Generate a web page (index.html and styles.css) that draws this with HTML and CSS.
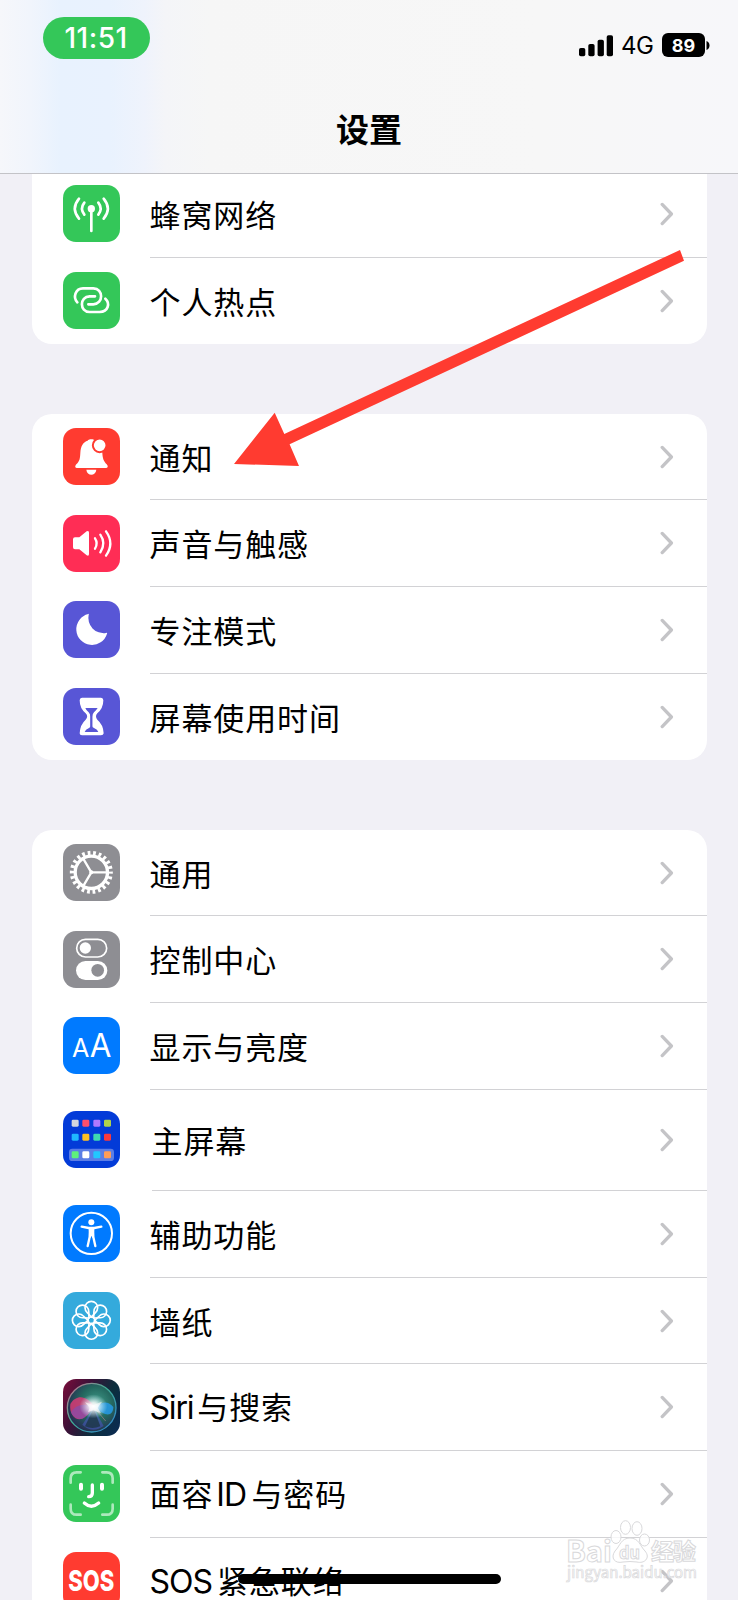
FILE: index.html
```html
<!DOCTYPE html>
<html lang="zh-CN">
	<head>
		<meta charset="utf-8">
		<title>设置</title>
		<meta name="viewport" content="width=device-width, initial-scale=1">
		<link rel="stylesheet" href="styles.css">
	</head>
	<body>
		<svg class="defs" aria-hidden="true">
			<symbol id="chevron" viewBox="0 0 14 24">
				<path d="M2.2 2.4 11.4 12 2.2 21.6" fill="none" stroke="#c4c4c7" stroke-width="3.3" stroke-linecap="round" stroke-linejoin="round"/>
			</symbol>
		</svg>
		
		<header class="navbar">
			<div class="status">
				<span class="clock">11:51</span>
				<div class="status-right">
					<svg class="signal" viewBox="0 0 34 22">
						<rect x="0" y="13" width="6.3" height="8.3" rx="1.8"/>
						<rect x="9.3" y="9" width="6.3" height="12.3" rx="1.8"/>
						<rect x="18.6" y="4.7" width="6.3" height="16.6" rx="1.8"/>
						<rect x="27.7" y="0.3" width="6.3" height="21" rx="1.8"/>
					</svg>
					<span class="network">4G</span>
					<span class="battery">89</span>
					<svg class="battery-cap" viewBox="0 0 4 9"><path d="M0.5 0C4.5 1 4.5 8 0.5 9Z"/></svg>
				</div>
			</div>
			<h1>设置</h1>
		</header>
		
		<main>
			<ul class="group first">
				<li class="row">
					<svg class="icon green" viewBox="0 0 171 171">
						<circle cx="85" cy="71" r="11" fill="#fff"/>
						<path class="line" stroke-width="8" d="M85 71V138M64 53Q50 71 64 89M106 53Q120 71 106 89M48 41Q23 71 48 101M122 41Q147 71 122 101"/>
					</svg>
					<div class="cell"><span>蜂窝网络</span><svg class="chevron"><use href="#chevron"/></svg></div>
				</li>
				<li class="row">
					<svg class="icon green" viewBox="0 0 171 171">
						<path class="line" stroke-width="8" d="M43 91C29 76 37 49 60 49H91C122 50 122 96 91 97H76M96 73H80C49 74 49 120 80 120H110C136 119 142 94 127 80"/>
					</svg>
					<div class="cell"><span>个人热点</span><svg class="chevron"><use href="#chevron"/></svg></div>
				</li>
			</ul>
			
			<ul class="group">
				<li class="row">
					<svg class="icon red" viewBox="0 0 171 171">
						<path fill="#fff" d="M41 120C35 120 36 113 40 109C50 99 51 93 52 75C53 53 61 42 74 38C75 32 95 32 96 38C106 42 117 53 118 75C119 93 122 99 131 109C136 114 135 120 130 120ZM70 125H100C98 145 72 145 70 125Z"/>
						<circle cx="110" cy="52" r="20.5" fill="#fff" stroke="#ff3b30" stroke-width="6"/>
					</svg>
					<div class="cell"><span>通知</span><svg class="chevron"><use href="#chevron"/></svg></div>
				</li>
				<li class="row">
					<svg class="icon pink" viewBox="0 0 171 171">
						<path fill="#fff" d="M36 67H49L71 49Q78 45 78 53V117Q78 125 71 121L49 103H36Q30 103 30 97V73Q30 67 36 67Z"/>
						<path class="line" stroke-width="7" d="M96 70Q106 85 96 101M112 59Q130 85 112 112M129 49Q155 85 129 122"/>
					</svg>
					<div class="cell"><span>声音与触感</span><svg class="chevron"><use href="#chevron"/></svg></div>
				</li>
				<li class="row">
					<svg class="icon indigo" viewBox="0 0 171 171">
						<path fill="#fff" d="M76 39A47 47 0 1 0 132 98Q134 94 129 96A46 46 0 0 1 77 41Q79 37 76 39Z"/>
					</svg>
					<div class="cell"><span>专注模式</span><svg class="chevron"><use href="#chevron"/></svg></div>
				</li>
				<li class="row">
					<svg class="icon indigo" viewBox="0 0 171 171">
						<path fill="#fff" d="M57 29H114Q121 30 121 37Q121 61 103 76Q95 85 103 95Q121 110 122 136Q121 142 114 142H57Q50 142 50 136Q51 110 68 95Q77 85 68 76Q50 61 50 37Q50 30 57 29Z"/>
						<path fill="#5856d6" d="M67 60H104Q99 68 93 73Q88 78 88 86V115Q88 118 93 120Q104 125 106 132H65Q67 125 78 120Q82 118 82 115V86Q82 78 77 73Q70 68 67 60Z"/>
						<path fill="none" stroke="#5856d6" stroke-width="5" d="M85 66V118"/>
					</svg>
					<div class="cell"><span>屏幕使用时间</span><svg class="chevron"><use href="#chevron"/></svg></div>
				</li>
			</ul>
			
			<ul class="group">
				<li class="row">
					<svg class="icon gray" viewBox="0 0 171 171">
						<circle cx="85" cy="85" r="58" fill="none" stroke="#fff" stroke-width="13" pathLength="220" stroke-dasharray="5 5" stroke-dashoffset="2.5"/>
						<circle cx="85" cy="85" r="48.5" fill="none" stroke="#fff" stroke-width="10"/>
						<path class="line" stroke-width="7" d="M85 85H130M85 85 62 46M85 85 62 124"/>
						<circle cx="85" cy="85" r="6" fill="#fff"/>
					</svg>
					<div class="cell"><span>通用</span><svg class="chevron"><use href="#chevron"/></svg></div>
				</li>
				<li class="row">
					<svg class="icon gray" viewBox="0 0 171 171">
						<rect x="41" y="25" width="90" height="53" rx="26.5" fill="none" stroke="#fff" stroke-width="5"/>
						<circle cx="67" cy="51" r="17" fill="#fff"/>
						<rect x="39" y="90" width="94" height="57" rx="28.5" fill="#fff"/>
						<circle cx="104" cy="118" r="19" fill="#8e8e93"/>
					</svg>
					<div class="cell"><span>控制中心</span><svg class="chevron"><use href="#chevron"/></svg></div>
				</li>
				<li class="row">
					<svg class="icon blue" viewBox="0 0 171 171">
						<text class="glyph" x="27" y="121" font-size="77" textLength="52" lengthAdjust="spacingAndGlyphs">A</text>
						<text class="glyph" x="80" y="121" font-size="97" textLength="65" lengthAdjust="spacingAndGlyphs">A</text>
					</svg>
					<div class="cell"><span>显示与亮度</span><svg class="chevron"><use href="#chevron"/></svg></div>
				</li>
				<li class="row tall">
					<svg class="icon home" viewBox="0 0 171 171">
						<rect x="18" y="113" width="135" height="37" rx="10" fill="#5b7de6"/>
						<rect x="26" y="26" width="21" height="21" rx="4" fill="#d3d6de"/>
						<rect x="58" y="26" width="21" height="21" rx="4" fill="#ff4f6c"/>
						<rect x="91" y="26" width="21" height="21" rx="4" fill="#b078ff"/>
						<rect x="123" y="26" width="21" height="21" rx="4" fill="#b1d34b"/>
						<rect x="26" y="68" width="21" height="21" rx="4" fill="#1fb8ff"/>
						<rect x="58" y="68" width="21" height="21" rx="4" fill="#ffc023"/>
						<rect x="91" y="68" width="21" height="21" rx="4" fill="#3fd8b0"/>
						<rect x="123" y="68" width="21" height="21" rx="4" fill="#f9393d"/>
						<rect x="26" y="121" width="21" height="21" rx="4" fill="#5ef27c"/>
						<rect x="58" y="121" width="21" height="21" rx="4" fill="#fff"/>
						<rect x="91" y="121" width="21" height="21" rx="4" fill="#21c7ff"/>
						<rect x="123" y="121" width="21" height="21" rx="4" fill="#ff9d58"/>
					</svg>
					<div class="cell"><span>主屏幕</span><svg class="chevron"><use href="#chevron"/></svg></div>
				</li>
				<li class="row">
					<svg class="icon blue" viewBox="0 0 171 171">
						<circle cx="85" cy="85" r="62" fill="none" stroke="#fff" stroke-width="6"/>
						<circle cx="85" cy="52" r="9" fill="#fff"/>
						<path class="line" stroke-width="7" d="M56 65 77 69H94L115 65M74 123 80 96 81 72M97 123 91 96 90 72"/>
						<path fill="#fff" d="M77 67H94L92 99H89L85 93 82 99H79Z"/>
					</svg>
					<div class="cell"><span>辅助功能</span><svg class="chevron"><use href="#chevron"/></svg></div>
				</li>
				<li class="row">
					<svg class="icon cyan" viewBox="0 0 171 171">
						<g fill="none" stroke="#fff" stroke-width="5" transform="translate(85 85)">
							<path id="petal" d="M0-10-13-24A19 19 0 1 1 13-24Z"/>
							<use href="#petal" transform="rotate(45)"/>
							<use href="#petal" transform="rotate(90)"/>
							<use href="#petal" transform="rotate(135)"/>
							<use href="#petal" transform="rotate(180)"/>
							<use href="#petal" transform="rotate(225)"/>
							<use href="#petal" transform="rotate(270)"/>
							<use href="#petal" transform="rotate(315)"/>
							<circle r="10"/>
						</g>
					</svg>
					<div class="cell"><span>墙纸</span><svg class="chevron"><use href="#chevron"/></svg></div>
				</li>
				<li class="row">
					<svg class="icon siri" viewBox="0 0 171 171">
						<defs>
							<linearGradient id="ring" x1="0" y1="0" x2="1" y2="1">
								<stop offset="0" stop-color="#d4688a"/>
								<stop offset=".45" stop-color="#3fae95"/>
								<stop offset="1" stop-color="#2f7fd0"/>
							</linearGradient>
							<radialGradient id="orb" cx=".6" cy=".4" r=".65">
								<stop offset="0" stop-color="#3f9a88"/>
								<stop offset=".5" stop-color="#24685f"/>
								<stop offset="1" stop-color="#252750"/>
							</radialGradient>
							<radialGradient id="glow">
								<stop offset="0" stop-color="#fff"/>
								<stop offset=".3" stop-color="#fff" stop-opacity=".85"/>
								<stop offset="1" stop-color="#c8f4ff" stop-opacity="0"/>
							</radialGradient>
						</defs>
						<circle cx="86" cy="86" r="73" fill="url(#orb)" stroke="url(#ring)" stroke-width="4"/>
						<path fill="#4a55c4" opacity=".55" d="M92 86 58 137Q88 165 122 141Z"/>
						<path fill="#1b3440" opacity=".75" d="M92 88 66 142Q88 152 112 142Z"/>
						<path fill="#d83b76" opacity=".85" d="M94 84C75 50 40 44 22 75C17 112 45 132 66 114C78 106 83 94 94 84Z"/>
						<path fill="#7b50b8" opacity=".6" d="M94 84C60 70 35 80 24 100C35 124 58 124 69 112Z"/>
						<path fill="#279ae8" opacity=".85" d="M94 84C110 72 132 60 151 84C150 115 125 112 94 84Z"/>
						<path fill="none" stroke="#e98aa0" stroke-width="2" opacity=".7" d="M94 86 128 126"/>
						<ellipse cx="91" cy="82" rx="42" ry="36" fill="url(#glow)"/>
						<path fill="#fff" d="M66 70 91 78 117 68 104 86 114 103 91 94 75 99 80 86Z" opacity=".6"/>
					</svg>
					<div class="cell"><span><b class="latin siri-word">Siri</b>与搜索</span><svg class="chevron"><use href="#chevron"/></svg></div>
				</li>
				<li class="row">
					<svg class="icon green" viewBox="0 0 171 171">
						<path class="line" stroke-width="8" opacity=".6" d="M23 53V40Q23 22 41 22H53M118 22H131Q149 22 149 40V53M149 119V131Q149 149 131 149H118M53 149H41Q23 149 23 131V119"/>
						<path class="line" stroke-width="12" d="M54 59V71M117 59V71"/>
						<path class="line" stroke-width="10" d="M88 60V84Q88 95 77 95M64 114Q85 133 107 114"/>
					</svg>
					<div class="cell"><span>面容<b class="latin id-word">ID</b>与密码</span><svg class="chevron"><use href="#chevron"/></svg></div>
				</li>
				<li class="row">
					<svg class="icon red" viewBox="0 0 171 171">
						<text class="glyph heavy" x="16" y="117" font-size="87" textLength="138" lengthAdjust="spacingAndGlyphs">SOS</text>
					</svg>
					<div class="cell"><span><b class="latin sos-word">SOS</b>紧急联络</span><svg class="chevron"><use href="#chevron"/></svg></div>
				</li>
			</ul>
		</main>
		
		<div class="home-indicator"></div>
		
		<svg class="arrow" viewBox="0 0 452 218" aria-hidden="true">
			<path fill="#ff3b30" d="M446 2 450 12.7 55.6 196.3 65 218 0 216 40.7 164.7 50.3 186Z"/>
		</svg>
		
		<svg class="watermark" viewBox="0 0 136 64" aria-hidden="true">
			<g class="mark">
				<text x="1" y="42" font-size="29" textLength="46" lengthAdjust="spacingAndGlyphs">Bai</text>
				<ellipse cx="51" cy="17" rx="5" ry="6.5"/>
				<ellipse cx="60.5" cy="7.5" rx="5" ry="6.8"/>
				<ellipse cx="72" cy="8.5" rx="5" ry="6.8"/>
				<ellipse cx="79.5" cy="20" rx="5" ry="6"/>
				<path d="M65 18C74 18 75 26 80 31C86 38 79 44 72 42Q65 41 58 42C50 44 45 38 50 31C55 26 56 18 65 18Z"/>
				<text x="54" y="38.5" font-size="17" textLength="21" lengthAdjust="spacingAndGlyphs">du</text>
				<text x="86" y="40" font-size="23" textLength="45">经验</text>
				<text class="url" x="2" y="58" font-size="15" textLength="130">jingyan.baidu.com</text>
			</g>
		</svg>
	</body>
</html>
```

FILE: styles.css
```css
* {
	box-sizing: border-box;
}
body {
	position: relative;
	margin: 0;
	height: 1600px;
	overflow: hidden;
	background: #f1f0f6;
	color: #000;
	font-family: "Noto Sans CJK SC", sans-serif;
}
.defs {
	display: none;
}

/* navigation bar */
.navbar {
	position: relative;
	z-index: 1;
	height: 174px;
	border-bottom: 1px solid #c3c3c7;
	background: linear-gradient(90deg, #f6f7fb 0, #f1f5fc 30px, #e8f2fe 60px, #e9f2fe 110px, #eff3fc 145px, #f4f5f8 165px, #f6f6f6 210px, #f7f7f7 540px, #f7f7fa 738px);
}
.status {
	display: flex;
	justify-content: space-between;
	align-items: flex-start;
	height: 104px;
	padding: 17px 28px 0 43px;
	font-family: Inter, sans-serif;
}
.clock {
	width: 107px;
	height: 42px;
	padding-right: 1px;
	border-radius: 21px;
	background: #34c759;
	color: #fff;
	font-size: 28px;
	font-weight: 500;
	letter-spacing: 0.5px;
	line-height: 43px;
	text-align: center;
}
.status-right {
	display: flex;
	align-items: center;
	height: 24px;
	margin-top: 16px;
}
.signal {
	width: 34px;
	height: 22px;
	margin-top: 2px;
}
.network {
	width: 33px;
	margin: 1px 8px 0 8px;
	font-size: 24px;
	letter-spacing: -0.6px;
}
.battery {
	width: 43px;
	height: 24px;
	border-radius: 6px;
	background: #000;
	color: #fff;
	font-size: 18px;
	font-weight: 700;
	line-height: 25px;
	text-align: center;
}
.battery-cap {
	width: 4px;
	height: 9px;
	margin-left: 1px;
}
h1 {
	margin: 0;
	font-size: 33px;
	font-weight: 700;
	line-height: 48px;
	text-align: center;
}

/* grouped lists */
main {
	display: flex;
	flex-direction: column;
	gap: 69.3px;
	margin-top: -3px;
	padding: 0 31.5px;
}
.group {
	margin: 0;
	padding: 0;
	border-radius: 20px;
	background: #fff;
	list-style: none;
}
.group.first {
	border-radius: 0 0 20px 20px;
}
.row {
	display: flex;
	align-items: center;
	height: 86.7px;
	padding-left: 31.5px;
}
.row.tall {
	height: 101.3px;
}
.icon {
	flex: none;
	width: 57px;
	height: 57px;
	margin-bottom: 1px;
	border-radius: 13px;
}
.cell {
	display: flex;
	flex: 1;
	justify-content: space-between;
	align-items: center;
	align-self: stretch;
	margin-left: 29.5px;
	padding-right: 32.5px;
	border-bottom: 1px solid #d2d2d5;
	font-size: 31px;
	letter-spacing: 0.9px;
	line-height: 46px;
}
.row.tall .cell {
	margin-left: 31.5px;
}
.row:last-child .cell {
	border-bottom: 0;
}
.chevron {
	width: 14px;
	height: 24px;
}
.latin {
	font-family: Inter, sans-serif;
	font-weight: 400;
	font-size: 32px;
	letter-spacing: -0.8px;
}
.siri-word {
	margin-right: 4px;
	letter-spacing: -1.2px;
}
.id-word {
	margin: 0 5px 0 3px;
}
.sos-word {
	margin-right: 5px;
	letter-spacing: -1px;
}

/* icon artwork */
.green { background: #34c759; }
.red { background: #ff3b30; }
.pink { background: #ff2d55; }
.indigo { background: #5856d6; }
.gray { background: #8e8e93; }
.blue { background: #007aff; }
.cyan { background: #34aadc; }
.home { background: #033bd8; }
.siri {
	background: linear-gradient(115deg, #7c0d3a 0, #3a1238 35%, #0c2f3d 65%, #0a2a55 100%);
}
.line {
	fill: none;
	stroke: #fff;
	stroke-linecap: round;
	stroke-linejoin: round;
}
.glyph {
	fill: #fff;
	font-family: Inter, sans-serif;
}
.glyph.heavy {
	font-weight: 800;
}

/* overlays */
.home-indicator {
	position: absolute;
	left: 238px;
	top: 1574px;
	width: 263px;
	height: 10px;
	border-radius: 5px;
	background: #000;
}
.arrow {
	position: absolute;
	left: 234px;
	top: 248px;
	width: 452px;
	height: 218px;
}
.watermark {
	position: absolute;
	left: 565px;
	top: 1520px;
	width: 136px;
	height: 64px;
}
.mark {
	fill: #fff;
	fill-opacity: 0.8;
	stroke: #d9d9db;
	stroke-width: 1;
	font-family: "Noto Sans CJK SC", sans-serif;
	font-weight: 700;
}
.mark .url {
	stroke-width: 0.7;
	font-weight: 400;
}
```
